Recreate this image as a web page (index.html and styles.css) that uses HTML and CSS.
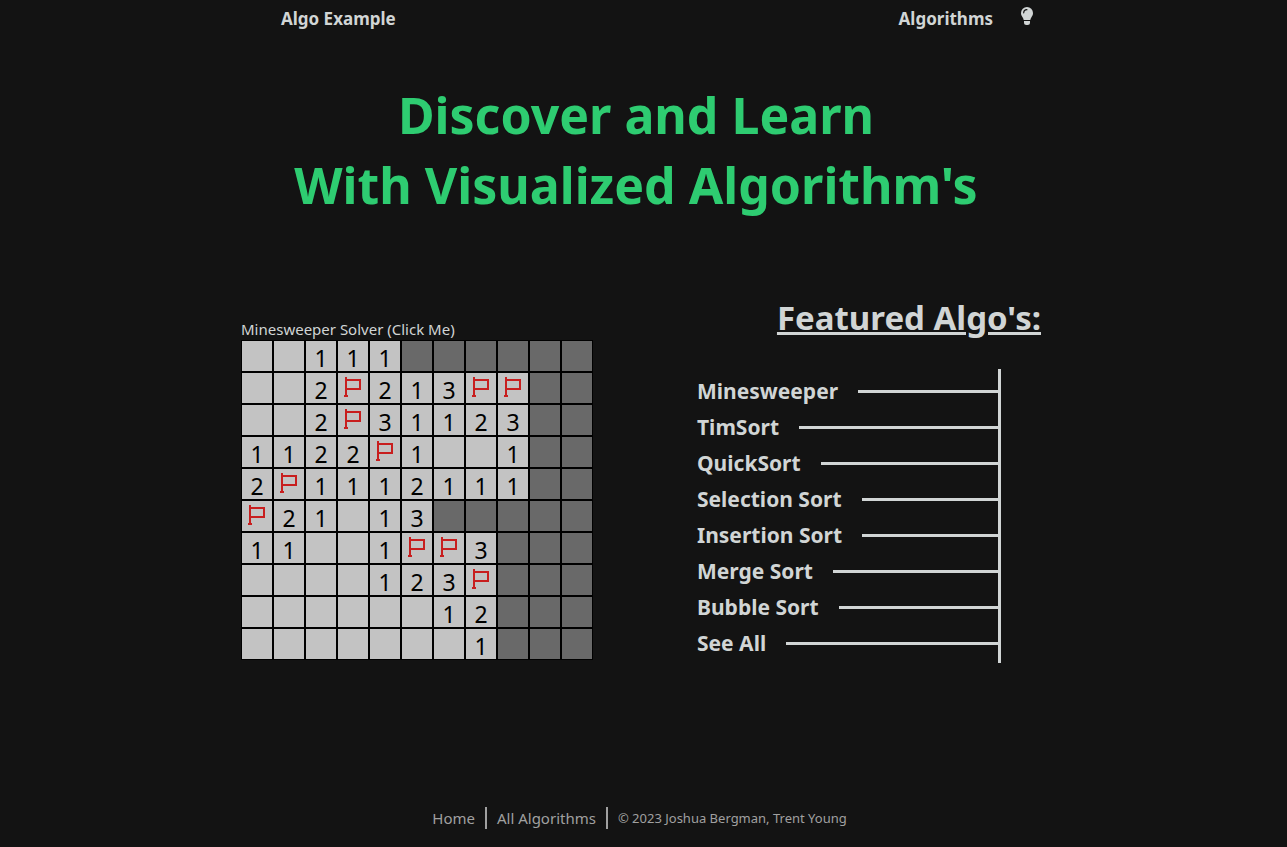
FILE: index.html
```html
<!DOCTYPE html>
<html lang="en">
<head>
<meta charset="utf-8">
<meta name="viewport" content="width=device-width, initial-scale=1">
<title>Algo Example</title>
<link rel="stylesheet" href="styles.css">
</head>
<body>
<svg class="sprite" aria-hidden="true">
  <symbol id="flag" viewBox="1 1 30 30"><path d="M9 5V25M7 24H11M9 8H23V17H9" fill="none" stroke="#c81e1e" stroke-width="2"/></symbol>
</svg>
<header class="nav">
  <a class="nav-link" href="#">Algo Example</a>
  <nav class="nav-right">
    <a class="nav-link" href="#">Algorithms</a>
    <button class="theme" type="button" aria-label="Toggle theme">
      <svg viewBox="0 0 12 18" width="12" height="18"><path fill="#d1d5d5" d="M6 0a6 6 0 0 1 6 6c0 1.600-.600 2.800-1.400 4-.7 1-1.100 1.900-1.300 3H2.700C2.500 11.900 2.100 11 1.400 10 .6 8.800 0 7.600 0 6a6 6 0 0 1 6-6zM3 14h6v1.500A2.500 2.500 0 0 1 6.500 18h-1A2.500 2.500 0 0 1 3 15.500z"/><path d="M2.700 5.800A3.200 3.200 0 0 1 5.900 2.700" fill="none" stroke="#131313" stroke-width="1.200" stroke-linecap="round"/></svg>
    </button>
  </nav>
</header>
<main>
  <h1 class="title">Discover and Learn<br>With Visualized Algorithm's</h1>
  <div class="columns">
    <section class="solver">
      <a class="solver-label" href="#">Minesweeper Solver (Click Me)</a>
      <table class="board" aria-label="Minesweeper board">
        <tr><td><td><td>1<td>1<td>1<td class="h"><td class="h"><td class="h"><td class="h"><td class="h"><td class="h"></tr>
        <tr><td><td><td>2<td><svg><use href="#flag"/></svg><td>2<td>1<td>3<td><svg><use href="#flag"/></svg><td><svg><use href="#flag"/></svg><td class="h"><td class="h"></tr>
        <tr><td><td><td>2<td><svg><use href="#flag"/></svg><td>3<td>1<td>1<td>2<td>3<td class="h"><td class="h"></tr>
        <tr><td>1<td>1<td>2<td>2<td><svg><use href="#flag"/></svg><td>1<td><td><td>1<td class="h"><td class="h"></tr>
        <tr><td>2<td><svg><use href="#flag"/></svg><td>1<td>1<td>1<td>2<td>1<td>1<td>1<td class="h"><td class="h"></tr>
        <tr><td><svg><use href="#flag"/></svg><td>2<td>1<td><td>1<td>3<td class="h"><td class="h"><td class="h"><td class="h"><td class="h"></tr>
        <tr><td>1<td>1<td><td><td>1<td><svg><use href="#flag"/></svg><td><svg><use href="#flag"/></svg><td>3<td class="h"><td class="h"><td class="h"></tr>
        <tr><td><td><td><td><td>1<td>2<td>3<td><svg><use href="#flag"/></svg><td class="h"><td class="h"><td class="h"></tr>
        <tr><td><td><td><td><td><td><td>1<td>2<td class="h"><td class="h"><td class="h"></tr>
        <tr><td><td><td><td><td><td><td><td>1<td class="h"><td class="h"><td class="h"></tr>
      </table>
    </section>
    <section class="featured">
      <h2 class="featured-title">Featured Algo's:</h2>
      <ul class="list">
        <li><a href="#">Minesweeper</a></li>
        <li><a href="#">TimSort</a></li>
        <li><a href="#">QuickSort</a></li>
        <li><a href="#">Selection Sort</a></li>
        <li><a href="#">Insertion Sort</a></li>
        <li><a href="#">Merge Sort</a></li>
        <li><a href="#">Bubble Sort</a></li>
        <li><a href="#">See All</a></li>
      </ul>
    </section>
  </div>
</main>
<footer class="footer">
  <a href="#">Home</a>
  <a href="#">All Algorithms</a>
  <small>© 2023 Joshua Bergman, Trent Young</small>
</footer>
</body>
</html>
```
FILE: styles.css
```css
* { box-sizing: border-box; }
body {
  margin: 0;
  min-height: 100vh;
  display: flex;
  flex-direction: column;
  background: #131313;
  color: #d1d5d5;
  font: 16px/24px "Segoe UI", "Noto Sans", "Open Sans", sans-serif;
}
a { color: inherit; text-decoration: none; }
.sprite { display: none; }

.nav {
  display: flex;
  justify-content: space-between;
  width: 100%;
  max-width: 787px;
  margin: 0 auto;
  padding: 7px 0 0 31px;
}
.nav-link { font-size: 17px; font-weight: 700; }
.nav-right { display: flex; align-items: flex-start; gap: 28px; }
.theme { padding: 0 4px 0 0; border: 0; background: none; cursor: pointer; }
.theme svg { display: block; }

.title {
  margin: 49px 0 0;
  padding-right: 15px;
  color: #2ecc71;
  font: 700 50px/70px Tahoma, "Noto Sans", sans-serif;
  text-align: center;
}

.columns {
  display: flex;
  justify-content: space-between;
  width: 100%;
  max-width: 805px;
  margin: 76px auto 0;
  padding-right: 5px;
}
.solver { padding-top: 22px; }
.solver-label { display: block; line-height: 22px; font-size: 15px; }
.board { border-collapse: separate; border-spacing: 0; }
.board td {
  width: 32px;
  height: 32px;
  padding: 4px 0 0;
  border: 1px solid #000;
  background: #c3c3c3;
  color: #000;
  font-size: 23px;
  line-height: 26px;
  text-align: center;
}
.board td:has(svg) { padding: 0; }
.board .h { background: #696969; }
.board svg { display: block; width: 30px; height: 30px; }

.featured-title {
  margin: 0;
  font-size: 33px;
  line-height: 44px;
  text-align: right;
  text-decoration: underline 3px;
}
.featured { width: 344px; }
.list {
  margin: 29px 40px 0 0;
  padding: 4px 0 2px;
  border-right: 3px solid #d1d5d5;
  list-style: none;
  font-size: 21px;
  font-weight: 700;
  line-height: 36px;
}
.list li { display: flex; align-items: center; gap: 20px; }
.list li::after { content: ""; flex: 1; height: 3px; background: #d1d5d5; }

.footer {
  display: flex;
  justify-content: center;
  align-items: center;
  margin-top: auto;
  padding: 0 8px 18px 0;
  color: #a0a0a0;
  line-height: 22px;
}
.footer a { padding-right: 10px; margin-right: 10px; border-right: 2px solid; font-size: 15px; }
.footer small { font-size: 13px; }
```
